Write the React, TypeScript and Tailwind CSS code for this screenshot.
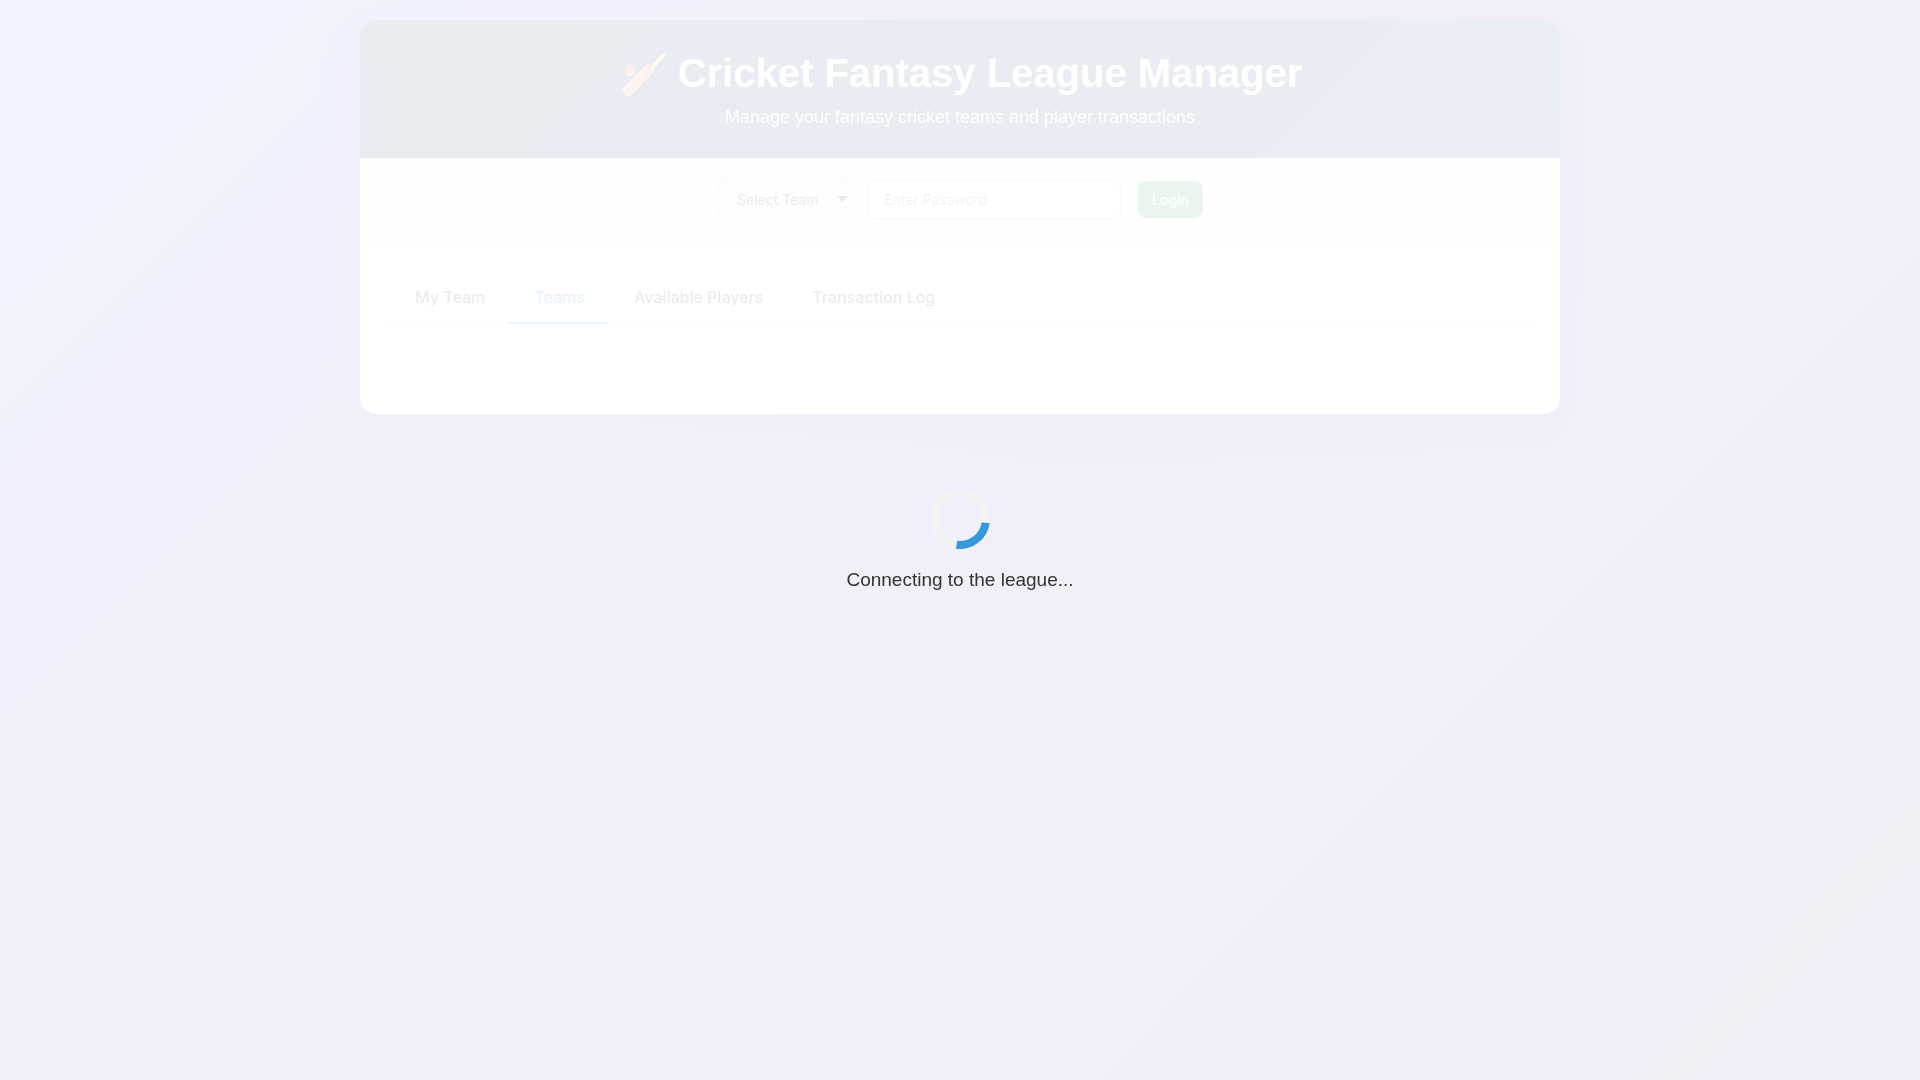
import { useState } from 'react';

const TABS = ['My Team', 'Teams', 'Available Players', 'Transaction Log'];

export default function App() {
  const [activeTab, setActiveTab] = useState('Teams');

  return (
    <div className="min-h-screen bg-[linear-gradient(135deg,#667eea_0%,#764ba0_100%)] p-5 font-['Liberation_Sans',sans-serif] text-[#333]">
      <div className="mx-auto max-w-[1200px] overflow-hidden rounded-2xl bg-white shadow-[0_20px_40px_rgba(0,0,0,0.1)]">
        <Header />
        <LoginBar />
        <main className="px-[30px] pt-[30px] pb-[90px]">
          <nav className="flex border-b border-[#dee2e6]">
            {TABS.map((tab) => (
              <TabButton
                key={tab}
                label={tab}
                active={tab === activeTab}
                onClick={() => setActiveTab(tab)}
              />
            ))}
          </nav>
        </main>
      </div>
      <LoadingOverlay />
    </div>
  );
}

function Header() {
  return (
    <header className="bg-[linear-gradient(135deg,#1e3c6e_0%,#284e92_100%)] px-8 py-[30px] text-center text-white">
      <h1 className="mb-2.5 flex items-center justify-center gap-3 text-[40px] leading-[47px] font-bold [text-shadow:2px_2px_4px_rgba(0,0,0,0.3)]">
        <CricketBat />
        Cricket Fantasy League Manager
      </h1>
      <p className="text-[18px] leading-[21px] opacity-90">
        Manage your fantasy cricket teams and player transactions
      </p>
    </header>
  );
}

function CricketBat() {
  return (
    <svg
      className="h-[46px] w-12 shrink-0 drop-shadow-[2px_2px_2px_rgba(0,0,0,0.3)]"
      viewBox="0 2 48 46"
      fill="none"
      aria-hidden="true"
    >
      <path d="M34 19 46 5.500" stroke="#ffb74d" strokeWidth="4" strokeLinecap="round" />
      <path d="M36 15.500 44.500 6" stroke="#ffe082" strokeWidth="1.500" strokeLinecap="round" />
      <path
        d="M28.500 15.500c1-1 2.300-1 3.300-.2l4 3.900c.9.900.9 2 .1 3L13.500 46.500c-1.500 1.600-3.500 1.800-5.100.5l-3.700-3.500c-1.400-1.500-1.500-3.300 0-4.900z"
        fill="#f0915c"
      />
      <path d="M29 17 34.500 22 30 24z" fill="#d9703e" />
      <path d="M5.500 41 28.500 17" stroke="#ffb182" strokeWidth="1.500" />
      <circle cx="12" cy="22" r="5" fill="#e5483a" />
      <path d="M8.500 25.500c3.500-.5 6.500-2.500 8-5.500M10 27c3-.6 5.500-2.400 7-5" stroke="#fff" strokeWidth="1" />
    </svg>
  );
}

function LoginBar() {
  return (
    <form
      onSubmit={(e) => e.preventDefault()}
      className="flex items-center justify-center gap-4 border-b border-[#e9ecef] bg-[#f0f2f4] px-8 py-5 font-[Inter,sans-serif] text-sm"
    >
      <div className="relative">
        <select
          aria-label="Select Team"
          className="h-[43px] w-[135px] appearance-none rounded-lg border-2 border-[#dcdcdc] bg-[#e4e4e4] pl-[18px] text-[#333]"
        >
          <option>Select Team</option>
        </select>
        <svg
          className="pointer-events-none absolute top-[18px] right-1 h-1.5 w-[11px]"
          viewBox="0 0 11 6"
          fill="#333"
        >
          <path d="M0 0h11L5.500 6z" />
        </svg>
      </div>
      <input
        type="password"
        aria-label="Password"
        placeholder="Enter Password"
        className="h-[41px] w-[254px] rounded-lg border-2 border-[#d4d7da] bg-white px-3.5 placeholder:text-[#757575]"
      />
      <button type="submit" className="rounded-lg bg-[#28a745] px-3.5 py-2 leading-[21px] font-medium text-white">
        Login
      </button>
    </form>
  );
}

interface TabButtonProps {
  label: string;
  active: boolean;
  onClick: () => void;
}

function TabButton({ label, active, onClick }: TabButtonProps) {
  return (
    <button
      onClick={onClick}
      className={`-mb-px border-b-2 py-[15px] pr-6 pl-[25px] font-[Inter,sans-serif] text-base leading-[20px] font-medium ${
        active ? 'border-[#007bff] text-[#007bff]' : 'border-transparent text-[#333]'
      }`}
    >
      {label}
    </button>
  );
}

function LoadingOverlay() {
  return (
    <div className="fixed inset-0 flex flex-col items-center justify-center gap-5 bg-white/90" role="status">
      <div className="h-[60px] w-[60px] rotate-[143deg] rounded-full border-8 border-[#f3f3f3] border-t-[#3498db]" />
      <p className="text-[19px] leading-[22px] text-[#333]">Connecting to the league...</p>
    </div>
  );
}
